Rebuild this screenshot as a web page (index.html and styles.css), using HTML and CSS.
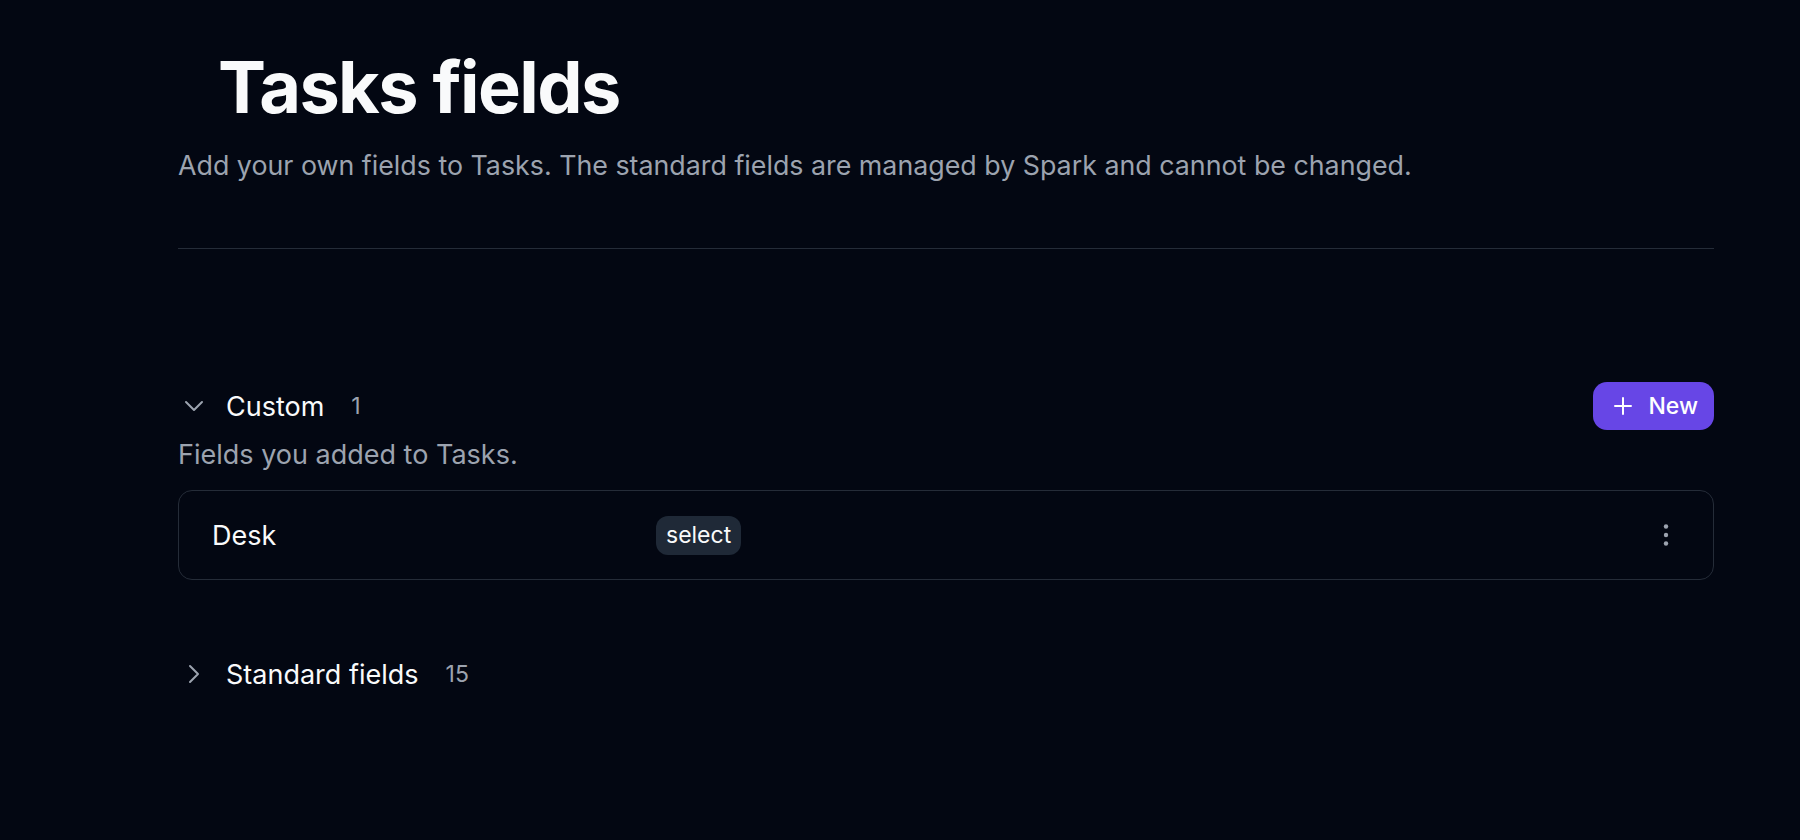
FILE: index.html
```html
<!DOCTYPE html>
<html lang="en">
<head>
  <meta charset="UTF-8" />
  <meta name="viewport" content="width=device-width, initial-scale=1" />
  <title>Tasks fields</title>
  <link rel="stylesheet" href="styles.css">
</head>
<body>

  <main class="page">
    <header class="page-head">
      <h1 class="page-title">Tasks fields</h1>
      <p class="page-desc">Add your own fields to Tasks. The standard fields are managed by Spark and cannot be changed.</p>
    </header>

    <hr class="divider" />

    <section class="group">
      <div class="group-head">
        <span class="chevron">
          <svg viewBox="0 0 24 24" width="32" height="32"><path d="m6 9 6 6 6-6" /></svg>
        </span>
        <h2 class="group-title">Custom</h2>
        <span class="count">1</span>
        <button class="btn-new">
          <svg viewBox="0 0 18 18" width="18" height="18"><path d="M9 1v16M1 9h16" /></svg>
          New
        </button>
      </div>
      <p class="group-desc">Fields you added to Tasks.</p>

      <ul class="field-list">
        <li class="field-row">
          <span class="field-name">Desk</span>
          <span class="field-type">select</span>
          <button class="row-menu" title="More">
            <svg viewBox="0 0 32 32" width="32" height="32">
              <circle cx="16" cy="7.5" r="2.2" />
              <circle cx="16" cy="16" r="2.2" />
              <circle cx="16" cy="24.5" r="2.2" />
            </svg>
          </button>
        </li>
      </ul>
    </section>

    <section class="group group-closed">
      <div class="group-head">
        <span class="chevron">
          <svg viewBox="0 0 24 24" width="32" height="32"><path d="m9 18 6-6-6-6" /></svg>
        </span>
        <h2 class="group-title">Standard fields</h2>
        <span class="count">15</span>
      </div>
    </section>
  </main>

</body>
</html>
```

FILE: styles.css
```css
:root {
  --bg-color: #030712;
  --text-color: #f9fafb;
  --muted: #9ca3af;
  --line: #252c38;
  --pill-bg: #1f2937;
  --accent: #6746e6;
}

body {
  font-family: Inter, "Noto Sans", sans-serif;
  margin: 0;
  background-color: var(--bg-color);
  color: var(--text-color);
}

.page {
  width: 1536px;
  padding: 51px 0 60px 178px;
}

.page-title {
  margin: 0;
  padding-left: 40px;
  font-size: 72px;
  line-height: 1;
  font-weight: 700;
  letter-spacing: -1.6px;
}

.page-desc {
  margin: 24px 0 0;
  font-size: 26.8px;
  line-height: 36px;
  color: var(--muted);
}

.divider {
  margin: 65px 0 0;
  border: none;
  border-top: 1px solid var(--line);
}

.group {
  margin-top: 133px;
}

.group-closed {
  margin-top: 70px;
}

.group-head {
  display: flex;
  align-items: center;
  min-height: 48px;
}

.chevron {
  display: flex;
  width: 32px;
  height: 32px;
  margin-right: 16px;
}

.chevron svg {
  fill: none;
  stroke: var(--muted);
  stroke-width: 1.5;
  stroke-linecap: round;
  stroke-linejoin: round;
}

.group-title {
  margin: 0;
  font-size: 27px;
  font-weight: 400;
}

.count {
  margin-left: 27px;
  font-size: 23px;
  color: var(--muted);
}

.btn-new {
  display: flex;
  align-items: center;
  gap: 16px;
  margin-left: auto;
  height: 48px;
  padding: 0 16px 0 21px;
  border: none;
  border-radius: 14px;
  background-color: var(--accent);
  color: #fff;
  font-family: inherit;
  font-size: 23px;
  font-weight: 500;
  cursor: pointer;
}

.btn-new svg {
  stroke: #fff;
  stroke-width: 2;
  stroke-linecap: round;
}

.group-desc {
  margin: 7px 0 0;
  font-size: 27px;
  line-height: 36px;
  color: var(--muted);
}

.field-list {
  list-style: none;
  margin: 17px 0 0;
  padding: 0;
}

.field-row {
  display: flex;
  align-items: center;
  height: 88px;
  padding: 0 31px 0 33px;
  border: 1px solid var(--line);
  border-radius: 14px;
}

.field-name {
  width: 444px;
  font-size: 27px;
}

.field-type {
  padding: 5px 10px 6px;
  border-radius: 12px;
  background-color: var(--pill-bg);
  font-size: 23px;
  line-height: 28px;
}

.row-menu {
  display: flex;
  margin-left: auto;
  padding: 0;
  border: none;
  background: none;
  cursor: pointer;
}

.row-menu svg {
  fill: var(--muted);
}
```
